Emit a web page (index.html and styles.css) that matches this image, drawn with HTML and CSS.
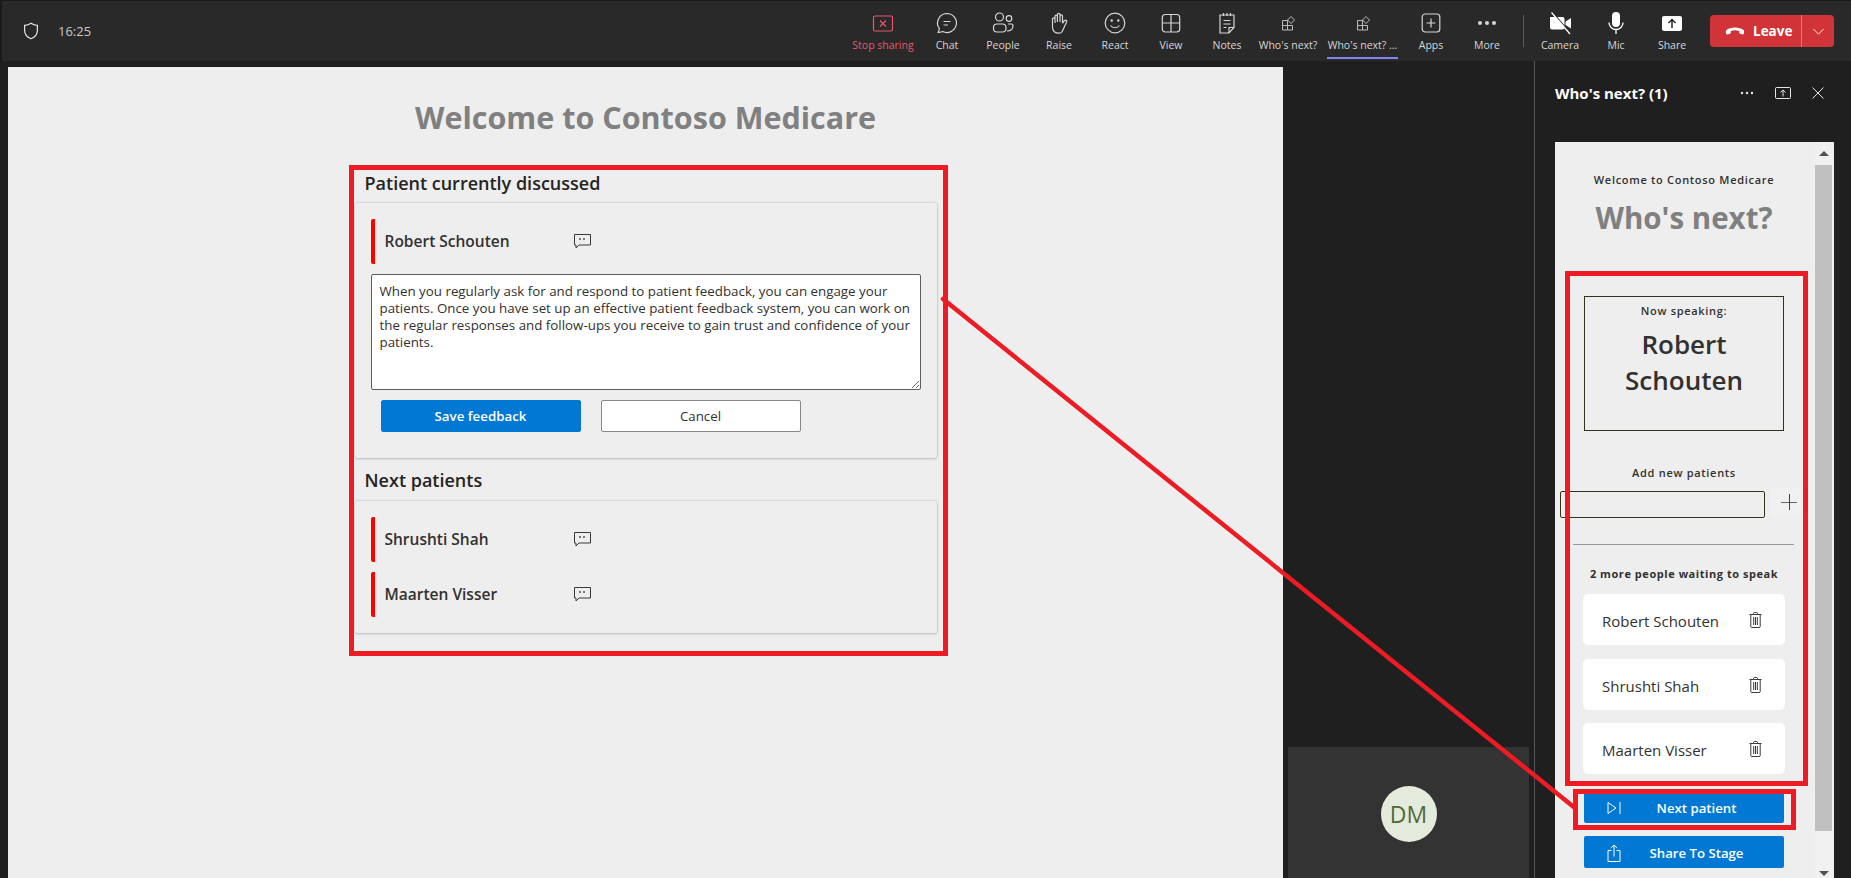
FILE: index.html
```html
<!DOCTYPE html>
<html lang="en">
<head>
<meta charset="utf-8">
<title>Who's next?</title>
<link rel="stylesheet" href="styles.css">
</head>
<body>
<div class="app">
  <header class="topbar">
    <div class="clock">
      <svg class="shield" viewBox="0 0 16 18"><path d="M8 1.2c1.8 1.3 3.9 2 6.4 2.1v5.2c0 3.8-2.2 6.5-6.4 8.2-4.200-1.700-6.400-4.400-6.400-8.200V3.300C4.100 3.200 6.200 2.500 8 1.200z"/></svg>
      <span>16:25</span>
    </div>
    <nav class="tools">
      <div class="tool tool-stop">
        <svg viewBox="0 0 24 24"><rect x="2.500" y="5" width="19" height="15" rx="1.500"/><path d="M9 9.500l6 6M15 9.500l-6 6"/></svg>
        <span>Stop sharing</span>
      </div>
      <div class="tool">
        <svg viewBox="0 0 24 24"><path d="M12 2.500a9.500 9.500 0 1 1-4.300 18c-1.200.5-3 1-4.600 1 .7-1.200 1.100-2.400 1.200-4A9.500 9.500 0 0 1 12 2.500z"/><path d="M8.500 10.500h7M8.500 14h4.500"/></svg>
        <span>Chat</span>
      </div>
      <div class="tool">
        <svg viewBox="0 0 24 24"><circle cx="8.500" cy="6" r="4"/><circle cx="18" cy="7.500" r="2.800"/><rect x="2.500" y="13" width="12.500" height="8" rx="3.500"/><path d="M17 13h3.500c1 0 1.500.6 1.500 1.500 0 3.500-2.500 5.500-6 5.500"/></svg>
        <span>People</span>
      </div>
      <div class="tool">
        <svg viewBox="0 0 24 24"><path d="M8 12V5.500c0-1.800 2.400-1.800 2.400 0V3.700c0-1.800 2.600-1.800 2.600 0v1.500c0-1.700 2.500-1.700 2.500 0v7c.9-1.700 2-3.200 3.300-3 1 .2 1.200 1 .7 2-1.500 3-2.700 6.500-4.500 9.500-.6 1-1.500 1.500-2.800 1.500-3.300 0-6.700-1-6.700-6.500V8c0-1.600 2.500-1.600 2.500 0z"/><path d="M10.400 5v6M13 5v6"/></svg>
        <span>Raise</span>
      </div>
      <div class="tool">
        <svg viewBox="0 0 24 24"><circle cx="12" cy="12" r="9.800"/><circle class="dot" cx="8.700" cy="9.500" r="1.200"/><circle class="dot" cx="15.300" cy="9.500" r="1.200"/><path d="M7.500 14.500c2.300 3 6.700 3 9 0"/></svg>
        <span>React</span>
      </div>
      <div class="tool">
        <svg viewBox="0 0 24 24"><rect x="3.300" y="3.500" width="17.400" height="17.500" rx="3"/><path d="M12 3.500V21M3.300 12h17.400"/></svg>
        <span>View</span>
      </div>
      <div class="tool">
        <svg viewBox="0 0 24 24"><path d="M5 4h14v12.500L14 22H5z"/><path d="M14 22v-5.500h5M8.500 2v3M12 2v3M15.500 2v3M8.500 9.500h7M8.500 13h7M8.500 16.500h3"/></svg>
        <span>Notes</span>
      </div>
      <div class="tool tool-app">
        <svg viewBox="0 0 24 24"><path class="thin" d="M6.500 9.500h5v5h-5zM6.500 14.500h5v4.500h-5zM11.500 14.500h5v4.500h-5zM15 5.500l3.500 3.500-3.500 3.500-3.500-3.500z"/></svg>
        <span>Who's next?</span>
      </div>
      <div class="tool tool-app tool-active">
        <svg viewBox="0 0 24 24"><path class="thin" d="M6.500 9.500h5v5h-5zM6.500 14.500h5v4.500h-5zM11.500 14.500h5v4.500h-5zM15 5.500l3.500 3.500-3.500 3.500-3.500-3.500z"/></svg>
        <span>Who's next? ...</span>
      </div>
      <div class="tool">
        <svg viewBox="0 0 24 24"><rect x="3.200" y="3" width="17.600" height="18" rx="3"/><path d="M12 7.500v9M7.500 12h9"/></svg>
        <span>Apps</span>
      </div>
      <div class="tool">
        <svg viewBox="0 0 24 24"><circle class="dot" cx="5" cy="12" r="2"/><circle class="dot" cx="12" cy="12" r="2"/><circle class="dot" cx="19" cy="12" r="2"/></svg>
        <span>More</span>
      </div>
      <div class="tool-sep"></div>
      <div class="tool tool-solid">
        <svg viewBox="0 0 24 24"><path d="M2 6h12.500a2 2 0 0 1 2 2v8.500a2 2 0 0 1-2 2H4a2 2 0 0 1-2-2zM17.500 10.500L23 7v10.500l-5.500-3.500z"/><path class="cut" d="M4.500 1.500L23 23"/><path class="slash" d="M3.500 1.500L22 23"/></svg>
        <span>Camera</span>
      </div>
      <div class="tool tool-solid">
        <svg viewBox="0 0 24 24"><rect x="8" y="1" width="8" height="15" rx="4"/><path class="slash plain" d="M5 11.500a7 7 0 0 0 14 0M12 18.500V23"/></svg>
        <span>Mic</span>
      </div>
      <div class="tool tool-solid">
        <svg viewBox="0 0 24 24"><rect x="2" y="5" width="20" height="15" rx="2"/><path class="cut" d="M12 17V9M8.500 12L12 8.500 15.500 12"/></svg>
        <span>Share</span>
      </div>
      <div class="leave">
        <div class="leave-main">
          <svg viewBox="0 0 22 12"><path d="M11 1.500c4 0 7.500 1 9.500 3 .8.800.7 2.500.2 4-.2.600-.8.900-1.400.7l-2.700-.7c-.6-.2-1-.7-1-1.300V5.500c-3-1-6.200-1-9.200 0v1.700c0 .6-.4 1.100-1 1.300l-2.700.7c-.6.200-1.200-.1-1.400-.7-.5-1.500-.6-3.200.2-4 2-2 5.500-3 9.500-3z"/></svg>
          <span>Leave</span>
        </div>
        <div class="leave-more">
          <svg viewBox="0 0 14 8"><path d="M1 1l6 6 6-6"/></svg>
        </div>
      </div>
    </nav>
  </header>

  <div class="workspace">
    <main class="stage">
      <h1 class="stage-title">Welcome to Contoso Medicare</h1>
      <section class="sheet">
        <h2 class="sheet-heading">Patient currently discussed</h2>
        <div class="card card-current">
          <div class="patient">
            <span class="patient-name">Robert Schouten</span>
            <svg class="note-icon" viewBox="0 0 17 15"><path d="M.5.500h16v10.500H5l-3 3v-3H.5z"/><path class="note-dots" d="M6 4v2M10 4v2"/></svg>
          </div>
          <textarea class="feedback" spellcheck="false">When you regularly ask for and respond to patient feedback, you can engage your patients. Once you have set up an effective patient feedback system, you can work on the regular responses and follow-ups you receive to gain trust and confidence of your patients.</textarea>
          <div class="actions">
            <button class="btn btn-primary">Save feedback</button>
            <button class="btn btn-plain">Cancel</button>
          </div>
        </div>
        <h2 class="sheet-heading sheet-heading-next">Next patients</h2>
        <div class="card card-list">
          <div class="patient">
            <span class="patient-name">Shrushti Shah</span>
            <svg class="note-icon" viewBox="0 0 17 15"><path d="M.5.500h16v10.500H5l-3 3v-3H.5z"/><path class="note-dots" d="M6 4v2M10 4v2"/></svg>
          </div>
          <div class="patient">
            <span class="patient-name">Maarten Visser</span>
            <svg class="note-icon" viewBox="0 0 17 15"><path d="M.5.500h16v10.500H5l-3 3v-3H.5z"/><path class="note-dots" d="M6 4v2M10 4v2"/></svg>
          </div>
        </div>
      </section>
    </main>

    <div class="gallery">
      <div class="tile">
        <div class="avatar">DM</div>
      </div>
    </div>

    <aside class="panel">
      <div class="panel-head">
        <span class="panel-title">Who's next? (1)</span>
        <svg class="panel-ico panel-dots" viewBox="0 0 14 4"><circle cx="2" cy="2" r="1.200"/><circle cx="7" cy="2" r="1.200"/><circle cx="12" cy="2" r="1.200"/></svg>
        <svg class="panel-ico panel-pop" viewBox="0 0 16 12"><rect x=".5" y=".5" width="15" height="11" rx="1"/><path d="M8 9.500V3M5.500 5.500L8 3l2.500 2.500"/></svg>
        <svg class="panel-ico panel-close" viewBox="0 0 12 12"><path d="M.5.500l11 11M11.500.500l-11 11"/></svg>
      </div>
      <div class="frame">
        <div class="frame-main">
          <p class="eyebrow">Welcome to Contoso Medicare</p>
          <h2 class="frame-title">Who's next?</h2>
          <div class="speaking">
            <p class="eyebrow">Now speaking:</p>
            <p class="speaking-name">Robert Schouten</p>
          </div>
          <p class="eyebrow add-label">Add new patients</p>
          <div class="add-row">
            <input class="add-input" type="text" aria-label="Add new patients">
            <button class="add-btn" aria-label="Add">
              <svg viewBox="0 0 16 16"><path class="plus-h" d="M0 8.500h16"/><path class="plus-v" d="M8.500 0v16"/></svg>
            </button>
          </div>
          <div class="rule"></div>
          <p class="eyebrow waiting">2 more people waiting to speak</p>
          <ul class="queue">
            <li class="queue-card"><span>Robert Schouten</span>
              <svg class="trash" viewBox="0 0 13 16"><path d="M.5 2.500h12M4.500 2.500v-1a1 1 0 0 1 1-1h2a1 1 0 0 1 1 1v1M1.800 2.500v12a1 1 0 0 0 1 1h7.400a1 1 0 0 0 1-1v-12M4.700 5v8M6.500 5v8M8.300 5v8"/></svg></li>
            <li class="queue-card"><span>Shrushti Shah</span>
              <svg class="trash" viewBox="0 0 13 16"><path d="M.5 2.500h12M4.500 2.500v-1a1 1 0 0 1 1-1h2a1 1 0 0 1 1 1v1M1.800 2.500v12a1 1 0 0 0 1 1h7.400a1 1 0 0 0 1-1v-12M4.700 5v8M6.500 5v8M8.300 5v8"/></svg></li>
            <li class="queue-card"><span>Maarten Visser</span>
              <svg class="trash" viewBox="0 0 13 16"><path d="M.5 2.500h12M4.500 2.500v-1a1 1 0 0 1 1-1h2a1 1 0 0 1 1 1v1M1.800 2.500v12a1 1 0 0 0 1 1h7.400a1 1 0 0 0 1-1v-12M4.700 5v8M6.500 5v8M8.300 5v8"/></svg></li>
          </ul>
          <button class="wide-btn wide-next">
            <svg viewBox="0 0 14 14"><path d="M1 1.500L9 7l-8 5.500zM13 1v12"/></svg>
            <span>Next patient</span>
          </button>
          <button class="wide-btn wide-share">
            <svg viewBox="0 0 14 18"><path d="M4.500 6.500H1v11h12v-11H9.500M7 12.500V1M3.800 4L7 1l3.200 3"/></svg>
            <span>Share To Stage</span>
          </button>
        </div>
        <div class="scrollbar">
          <div class="scroll-btn"><span class="arrow arrow-up"></span></div>
          <div class="scroll-thumb"></div>
          <div class="scroll-btn scroll-btn-down"><span class="arrow arrow-down"></span></div>
        </div>
      </div>
    </aside>
  </div>

  <svg class="annotations" viewBox="0 0 1851 878">
    <rect x="351.500" y="167.500" width="594" height="486"/>
    <rect x="1567.500" y="273.500" width="238" height="510"/>
    <rect x="1575.500" y="791.500" width="218" height="36"/>
    <path d="M943 299L1575 808"/>
  </svg>
</div>
</body>
</html>
```

FILE: styles.css
```css
* { box-sizing: border-box; }
html, body { margin: 0; padding: 0; height: 100%; }
body {
  background: #1f1f1f;
  font-family: "Open Sans", "Noto Sans", "Liberation Sans", sans-serif;
  color: #323130;
  overflow: hidden;
}
p, h1, h2, ul { margin: 0; padding: 0; }
ul { list-style: none; }
button { font-family: inherit; cursor: pointer; }

.app {
  position: relative;
  width: 1851px;
  height: 878px;
  display: flex;
  flex-direction: column;
  overflow: hidden;
}

/* top bar */
.topbar {
  height: 61px;
  flex: none;
  display: flex;
  justify-content: space-between;
  align-items: flex-start;
  background: #292929;
  border-top: 1px solid #1a1a1a;
  border-left: 2px solid #1a1a1a;
  padding-right: 17px;
}
.clock {
  display: flex;
  align-items: center;
  height: 60px;
  padding-left: 21px;
  color: #c8c8c8;
  font-size: 13px;
}
.shield { width: 16px; height: 18px; margin-right: 19px; }
.shield path { fill: none; stroke: #e6e6e6; stroke-width: 1.200; }
.tools { display: flex; align-items: flex-start; }
.tool {
  width: 56px;
  height: 58px;
  padding-top: 10px;
  display: flex;
  flex-direction: column;
  align-items: center;
  border-bottom: 2px solid transparent;
  color: #d6d6d6;
  font-size: 10.500px;
  line-height: 14px;
  white-space: nowrap;
}
.tool svg {
  width: 24px;
  height: 24px;
  margin-bottom: 3px;
  flex: none;
  fill: none;
  stroke: #d6d6d6;
  stroke-width: 1.200;
}
.tool .dot { fill: #d6d6d6; stroke: none; }
.tool .thin { stroke-width: 1; stroke: #bdbdbd; }
.tool-stop { width: 72px; color: #e8566f; }
.tool-stop svg { stroke: #e8566f; }
.tool-app { width: 66px; }
.tool-active { width: 71px; margin-left: 6px; margin-right: 5px; border-bottom-color: #7f85f5; }
.tool-sep { width: 1px; height: 32px; margin: 14px 8px 0 8px; background: #5c5c5c; }
.tool-solid svg { fill: #fff; stroke: none; }
.tool-solid .slash { fill: none; stroke: #fff; stroke-width: 1.300; }
.tool-solid .cut { fill: none; stroke: #292929; stroke-width: 1.500; }
.leave {
  width: 124px;
  height: 32px;
  margin: 14px 0 0 10px;
  display: flex;
  background: #d13438;
  border-radius: 4px;
  color: #fff;
}
.leave-main {
  width: 92px;
  display: flex;
  align-items: center;
  padding-left: 15px;
  border-right: 1px solid #e4787b;
  font-size: 13.500px;
  font-weight: 700;
}
.leave-main svg { width: 20px; height: 11px; margin-right: 8px; fill: #fff; }
.leave-more { flex: 1; display: flex; align-items: center; justify-content: center; }
.leave-more svg { width: 13px; height: 7px; fill: none; stroke: #fff; stroke-width: 1; }

/* main area */
.workspace { flex: 1; display: flex; min-height: 0; }
.stage {
  width: 1275px;
  flex: none;
  margin: 6px 0 0 8px;
  padding-top: 30px;
  background: #eee;
  display: flex;
  flex-direction: column;
  align-items: center;
}
.stage-title {
  font-size: 30.500px;
  line-height: 40px;
  font-weight: 700;
  color: #808080;
}
.sheet { width: 582px; margin-top: 34px; }
.sheet-heading {
  padding-left: 10px;
  font-size: 18px;
  line-height: 24px;
  font-weight: 600;
  color: #252423;
}
.sheet-heading-next { margin-top: 10px; padding-bottom: 1px; line-height: 24px; }
.card {
  margin-top: 8px;
  padding: 16px;
  background: #eee;
  border-radius: 2px;
  box-shadow: 0 0 2px rgba(0,0,0,.25), 0 1px 3px rgba(0,0,0,.15);
}
.card-current { height: 255px; }
.card-list { height: 132px; display: flex; flex-direction: column; gap: 10px; }
.patient {
  height: 45px;
  display: flex;
  align-items: center;
  border-left: 4px solid #f00;
  border-radius: 2px;
  padding-left: 10px;
}
.patient-name {
  width: 189px;
  margin-bottom: 2px;
  font-size: 15.500px;
  font-weight: 600;
  color: #323130;
}
.note-icon {
  width: 17px;
  height: 15px;
  fill: none;
  stroke: #3b3a39;
  stroke-width: 1;
}
.note-dots { stroke-width: 1.300; }
.feedback {
  display: block;
  width: 550px;
  height: 116px;
  margin-top: 10px;
  padding: 8px;
  border: 1px solid #605e5c;
  border-radius: 2px;
  background: #fff;
  color: #323130;
  font-family: inherit;
  font-size: 13.330px;
  line-height: 17px;
  outline: none;
}
.actions { display: flex; gap: 20px; margin: 10px 0 0 10px; }
.btn {
  width: 200px;
  height: 32px;
  padding: 0;
  border-radius: 2px;
  font-size: 13.300px;
  font-weight: 600;
}
.btn-primary { background: #0078d4; border: 1px solid #0078d4; color: #fff; }
.btn-plain { background: #fff; border: 1px solid #8a8886; color: #323130; font-weight: 400; }

/* gallery */
.gallery {
  width: 251px;
  flex: none;
  display: flex;
  flex-direction: column;
  justify-content: flex-end;
  padding: 0 5px 0 5px;
}
.tile {
  height: 131px;
  background: #333;
  padding-top: 39px;
  display: flex;
  justify-content: center;
  align-items: flex-start;
}
.avatar {
  width: 56px;
  height: 56px;
  border-radius: 50%;
  background: #e5ebdc;
  color: #4f6b3b;
  font-size: 23px;
  line-height: 56px;
  text-align: center;
}

/* side panel */
.panel {
  width: 317px;
  flex: none;
  border-left: 1px solid #555;
  background: #1f1f1f;
  display: flex;
  flex-direction: column;
}
.panel-head {
  height: 81px;
  flex: none;
  display: flex;
  align-items: center;
  padding: 0 0 18px 20px;
  color: #fff;
}
.panel-title { width: 184px; font-size: 15px; font-weight: 700; }
.panel-ico { flex: none; fill: none; stroke: #e6e6e6; stroke-width: 1; }
.panel-dots { width: 14px; height: 4px; fill: #e6e6e6; stroke: none; margin-left: 1px; }
.panel-pop { width: 16px; height: 12px; margin-left: 21px; }
.panel-close { width: 12px; height: 12px; margin-left: 21px; }

.frame {
  flex: 1;
  min-height: 0;
  margin: 0 17px 0 20px;
  display: flex;
  background: #eee;
  overflow: hidden;
}
.frame-main { width: 258px; flex: none; padding-top: 30px; }
.eyebrow {
  font-size: 11px;
  line-height: 16px;
  font-weight: 600;
  letter-spacing: .7px;
  text-align: center;
  color: #323130;
}
.frame-title {
  margin-top: 10px;
  font-size: 29.500px;
  line-height: 40px;
  font-weight: 700;
  color: #808080;
  text-align: center;
}
.speaking {
  width: 200px;
  height: 135px;
  margin: 58px 0 0 29px;
  padding-top: 6px;
  border: 1px solid #33331f;
}
.speaking-name {
  margin: 7px auto 0;
  width: 160px;
  font-size: 26px;
  line-height: 36px;
  font-weight: 600;
  text-align: center;
  color: #323130;
}
.add-label { margin-top: 34px; }
.add-row { display: flex; align-items: flex-start; margin: 6px 0 0 5px; }
.add-input {
  width: 205px;
  height: 27px;
  margin-top: 4px;
  background: #eee;
  border: 1px solid #33331f;
  border-radius: 2px;
  outline: none;
}
.add-btn {
  width: 31px;
  height: 30px;
  margin-left: 5px;
  padding: 0 0 0 11px;
  border: 0;
  background: #f0f0f0;
  display: flex;
  align-items: center;
  justify-content: flex-start;
}
.add-btn svg { width: 16px; height: 16px; flex: none; fill: none; stroke-width: 1; }
.plus-h { stroke: #666; }
.plus-v { stroke: #6a1b8a; }
.rule { width: 221px; height: 1px; margin: 26px 0 0 18px; background: #999; }
.waiting { margin-top: 21px; font-weight: 700; letter-spacing: .55px; }
.queue { margin: 12px 0 0 28px; }
.queue-card {
  width: 202px;
  height: 51px;
  display: flex;
  align-items: center;
  justify-content: space-between;
  padding: 2px 23px 0 19px;
  background: #fff;
  border-radius: 5px;
  font-size: 15px;
  color: #323130;
}
.queue-card + .queue-card { margin-top: 14px; }
.queue-card:last-child { margin-top: 13px; }
.trash { width: 13px; height: 16px; margin-top: -2px; fill: none; stroke: #3b3a39; stroke-width: 1; }
.wide-btn {
  width: 200px;
  height: 32px;
  margin-left: 29px;
  display: flex;
  align-items: center;
  padding: 2px 12px 0 23px;
  border: 0;
  border-radius: 2px;
  background: #0078d4;
  color: #fff;
  font-size: 13.200px;
  font-weight: 600;
}
.wide-btn svg { width: 14px; height: 14px; flex: none; fill: none; stroke: #fff; stroke-width: 1; }
.wide-share svg { height: 18px; }
.wide-btn span { flex: 1; text-align: center; }
.wide-next { margin-top: 17px; }
.wide-share { margin-top: 13px; }

.scrollbar {
  flex: 1;
  background: #f0f0f0;
  display: flex;
  flex-direction: column;
  align-items: center;
}
.scroll-btn { height: 23px; flex: none; display: flex; align-items: center; justify-content: center; }
.scroll-btn-down { height: 47px; align-items: flex-end; padding-bottom: 2px; }
.scroll-thumb { width: 17px; flex: 1; background: #c0c0c0; }
.arrow { width: 0; height: 0; border-left: 5px solid transparent; border-right: 5px solid transparent; }
.arrow-up { border-bottom: 5px solid #505050; }
.arrow-down { border-top: 5px solid #505050; }

/* annotation layer */
.annotations {
  position: absolute;
  inset: 0;
  width: 1851px;
  height: 878px;
  pointer-events: none;
  fill: none;
  stroke: #ed1c24;
  stroke-width: 5;
}
.annotations path { stroke-width: 4.500; stroke-linecap: round; }
```
